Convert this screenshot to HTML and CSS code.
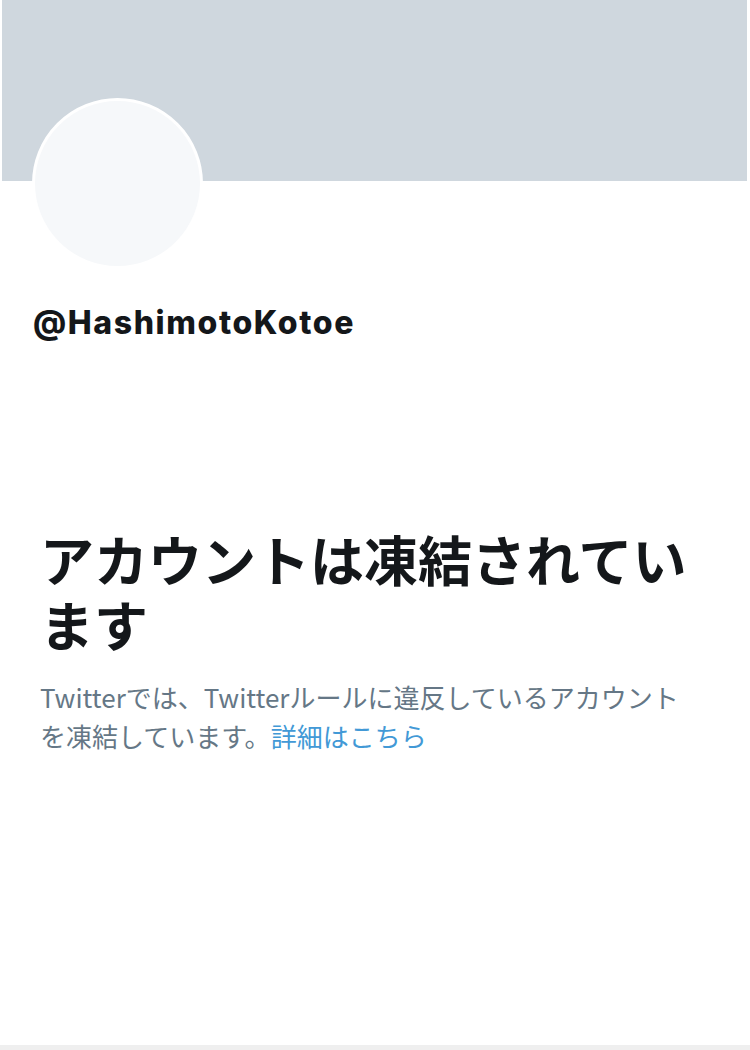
FILE: index.html
```html
<!DOCTYPE html>
<html lang="ja">
<head>
    <meta charset="UTF-8">
    <meta name="viewport" content="width=device-width, initial-scale=1.0">
    <title>@HashimotoKotoe</title>
    <link rel="stylesheet" href="styles.css">
</head>
<body>
    <div class="page">
        <header class="profile-header">
            <div class="banner"></div>
            <div class="avatar"></div>
            <h2 class="username">@HashimotoKotoe</h2>
        </header>

        <main class="suspended">
            <h1 class="suspended-title">アカウントは凍結されています</h1>
            <p class="suspended-text">Twitterでは、Twitterルールに違反しているアカウントを凍結しています。<a href="#" class="link">詳細はこちら</a></p>
        </main>

        <footer class="bottom-bar"></footer>
    </div>
</body>
</html>
```

FILE: styles.css
```css
:root {
    --banner: #cfd7de;
    --avatar: #f6f8fa;
    --text: #14171a;
    --text-light: #657786;
    --link: #4299d6;
    --line: #efefef;
}

* {
    box-sizing: border-box;
    margin: 0;
    padding: 0;
}

body {
    font-family: Inter, "Noto Sans CJK JP", sans-serif;
    background: #ffffff;
    color: var(--text);
}

.page {
    min-height: 1050px;
    display: flex;
    flex-direction: column;
}

.banner {
    height: 181px;
    margin: 0 3px 0 2px;
    background: var(--banner);
}

.avatar {
    width: 171px;
    height: 171px;
    margin: -83px 0 0 32px;
    border-radius: 50%;
    border: 3px solid #ffffff;
    background: var(--avatar);
}

.username {
    margin: 35px 0 0 33px;
    font-size: 32px;
    line-height: 38px;
    font-weight: 800;
    letter-spacing: 1.6px;
}

.suspended {
    padding: 184px 42px 0 40px;
}

.suspended-title {
    font-family: "Noto Sans CJK JP", sans-serif;
    font-size: 54px;
    line-height: 65px;
    font-weight: 700;
}

.suspended-text {
    margin-top: 21px;
    padding-right: 8px;
    font-family: "Noto Sans CJK JP", sans-serif;
    font-size: 26px;
    line-height: 39px;
    color: var(--text-light);
}

.link {
    color: var(--link);
    text-decoration: none;
}

.bottom-bar {
    margin-top: auto;
    height: 5px;
    background: var(--line);
}
```
